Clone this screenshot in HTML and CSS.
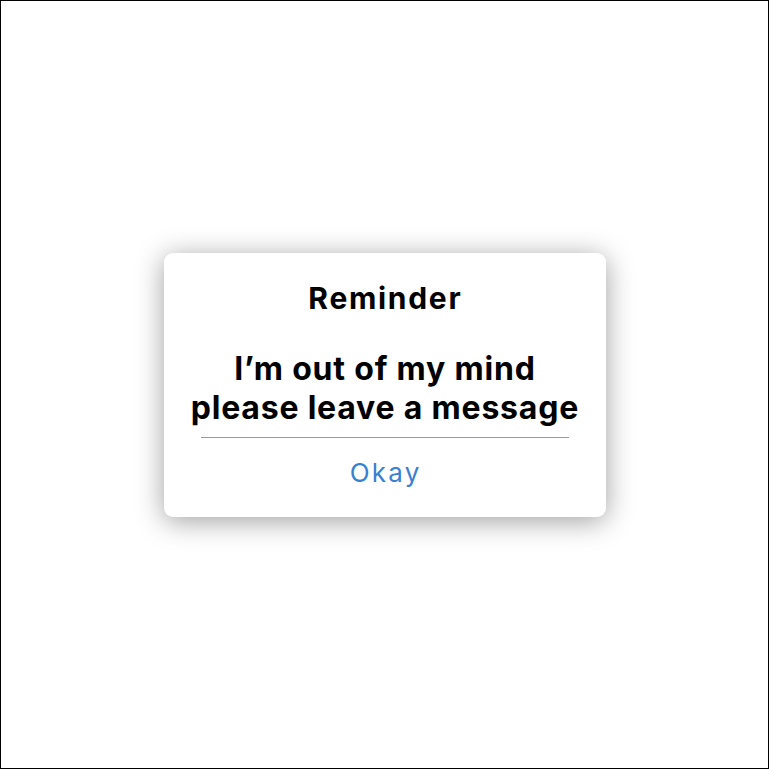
FILE: index.html
```html
<!DOCTYPE html>
<html>
<head>
<meta charset="utf-8">
<link rel="stylesheet" href="styles.css">
</head>
<body>
<div class="frame">
  <div class="alert">
    <div class="title">Reminder</div>
    <div class="message">I’m out of my mind<br>please leave a message</div>
    <div class="divider"></div>
    <div class="action">Okay</div>
  </div>
</div>
</body>
</html>
```
FILE: styles.css
```css
html, body {
  margin: 0;
  padding: 0;
  background: #ffffff;
}
.frame {
  box-sizing: border-box;
  width: 769px;
  height: 769px;
  border: 1px solid #000000;
  display: flex;
  align-items: center;
  justify-content: center;
  font-family: Inter, "Liberation Sans", sans-serif;
}
.alert {
  box-sizing: border-box;
  width: 442px;
  height: 264px;
  background: #ffffff;
  border-radius: 9px;
  box-shadow: 0 4px 28px rgba(0, 0, 0, 0.38);
  padding: 30px 0 0;
  display: flex;
  flex-direction: column;
  align-items: center;
  text-align: center;
  color: #000000;
}
.title {
  font-size: 30px;
  font-weight: 700;
  line-height: 30px;
  letter-spacing: 1.7px;
  padding-left: 1.7px;
  white-space: nowrap;
}
.message {
  margin-top: 36px;
  font-size: 32px;
  font-weight: 700;
  line-height: 39px;
  letter-spacing: 0.8px;
  padding-left: 0.8px;
  white-space: nowrap;
}
.divider {
  align-self: stretch;
  height: 1px;
  background: #9a9a9a;
  margin: 10px 37px 0;
}
.action {
  margin-top: 20px;
  font-size: 26px;
  line-height: 30px;
  color: #3a80d2;
  letter-spacing: 2.2px;
  padding-left: 2.2px;
}
```
